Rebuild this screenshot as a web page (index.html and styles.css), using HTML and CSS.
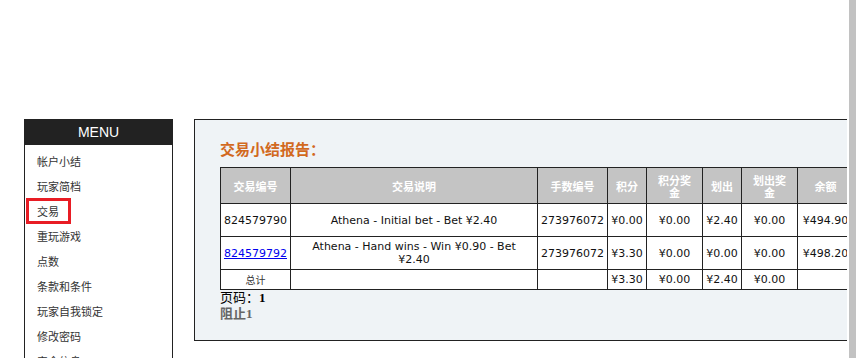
FILE: index.html
```html
<!DOCTYPE html>
<html lang="zh">
<head>
<meta charset="utf-8">
<title>交易小结报告</title>
<link rel="stylesheet" href="styles.css">
</head>
<body>
<div class="page">
  <div class="layout">
    <aside class="menu">
      <div class="menu-head">MENU</div>
      <ul class="menu-list">
        <li class="menu-item"><a href="#">帐户小结</a></li>
        <li class="menu-item"><a href="#">玩家简档</a></li>
        <li class="menu-item active"><a href="#">交易</a></li>
        <li class="menu-item"><a href="#">重玩游戏</a></li>
        <li class="menu-item"><a href="#">点数</a></li>
        <li class="menu-item"><a href="#">条款和条件</a></li>
        <li class="menu-item"><a href="#">玩家自我锁定</a></li>
        <li class="menu-item"><a href="#">修改密码</a></li>
        <li class="menu-item"><a href="#">安全信息</a></li>
      </ul>
    </aside>
    <main class="panel">
      <h2 class="panel-title">交易小结报告：</h2>
      <table class="report">
        <colgroup>
          <col class="c-id"><col class="c-desc"><col class="c-hand"><col class="c-s"><col class="c-m"><col class="c-s"><col class="c-m"><col class="c-m">
        </colgroup>
        <thead>
          <tr>
            <th>交易编号</th><th>交易说明</th><th>手数编号</th><th>积分</th><th>积分奖金</th><th>划出</th><th>划出奖金</th><th>余额</th>
          </tr>
        </thead>
        <tbody>
          <tr class="row">
            <td>824579790</td><td class="desc">Athena - Initial bet - Bet ¥2.40</td><td>273976072</td><td>¥0.00</td><td>¥0.00</td><td>¥2.40</td><td>¥0.00</td><td>¥494.90</td>
          </tr>
          <tr class="row">
            <td><a class="txn-link" href="#">824579792</a></td><td class="desc">Athena - Hand wins - Win ¥0.90 - Bet ¥2.40</td><td>273976072</td><td>¥3.30</td><td>¥0.00</td><td>¥0.00</td><td>¥0.00</td><td>¥498.20</td>
          </tr>
          <tr class="total">
            <td class="total-label">总计</td><td></td><td></td><td>¥3.30</td><td>¥0.00</td><td>¥2.40</td><td>¥0.00</td><td></td>
          </tr>
        </tbody>
      </table>
      <div class="pager">页码：<b>1</b></div>
      <div class="pager-stop">阻止<b>1</b></div>
    </main>
  </div>
</div>
<div class="scrollbar"></div>
</body>
</html>
```
FILE: styles.css
```css
html, body {
  margin: 0;
  padding: 0;
  background: #ffffff;
}
.page {
  width: 847px;
  height: 358px;
  overflow: hidden;
}
.layout {
  display: flex;
  align-items: flex-start;
  gap: 21px;
  padding: 119px 0 0 24px;
}
.menu {
  flex: none;
  width: 149px;
  height: 300px;
  box-sizing: border-box;
  border: 1px solid #222;
  border-top: none;
  background: #fff;
}
.menu-head {
  height: 26px;
  margin: 0 -1px;
  background: #222;
  color: #fff;
  font: 14px/27px "Liberation Sans", Arial, sans-serif;
  text-align: center;
}
.menu-list {
  list-style: none;
  margin: 0;
  padding: 3px 0 0 0;
}
.menu-item {
  height: 25px;
  display: flex;
  align-items: center;
  padding-left: 12px;
}
.menu-item a {
  color: #333;
  text-decoration: none;
  font: 11px/14px "Noto Sans CJK SC", sans-serif;
}
.menu-item.active a {
  display: inline-block;
  border: 3px solid #e81c24;
  padding: 3px 9px 3px 8px;
  margin-left: -11px;
}
.panel {
  flex: none;
  width: 700px;
  box-sizing: border-box;
  border: 1px solid #222;
  background: #eff3f6;
  padding: 19px 25px 18px 25px;
}
.panel-title {
  margin: 0 0 8px 0;
  font: bold 15px/20px "Noto Sans CJK SC", sans-serif;
  color: #d2691e;
}
.report {
  border-collapse: collapse;
  table-layout: fixed;
  width: 634px;
  background: #fff;
  font: 11px/13px "DejaVu Sans", Verdana, sans-serif;
  color: #111;
}
.c-id { width: 70px; }
.c-desc { width: 247px; }
.c-hand { width: 70px; }
.c-s { width: 39px; }
.c-m { width: 56px; }
.report th, .report td {
  border: 1px solid #222;
  text-align: center;
}
.report th {
  background: #c4c4c4;
  color: #fff;
  font: bold 11px/12px "Noto Sans CJK SC", sans-serif;
  height: 35px;
  padding: 0 7px;
}
.report td {
  padding: 0 2px;
}
.report td.desc {
  padding: 0 8px;
}
.row td {
  height: 32px;
}
.total td {
  height: 19px;
}
.total-label {
  font: 10px/12px "Noto Sans CJK SC", sans-serif;
  color: #333;
}
.txn-link {
  color: #0000ee;
  text-decoration: underline;
}
.pager {
  font: 13px/16px "Liberation Serif", "Noto Sans CJK SC", serif;
  color: #000;
}
.pager-stop {
  font: bold 13px/16px "Liberation Serif", "Noto Sans CJK SC", serif;
  color: #666;
}
.scrollbar {
  position: fixed;
  top: 0;
  right: 0;
  width: 7px;
  height: 100%;
  background: #c2c2c2;
}
```
